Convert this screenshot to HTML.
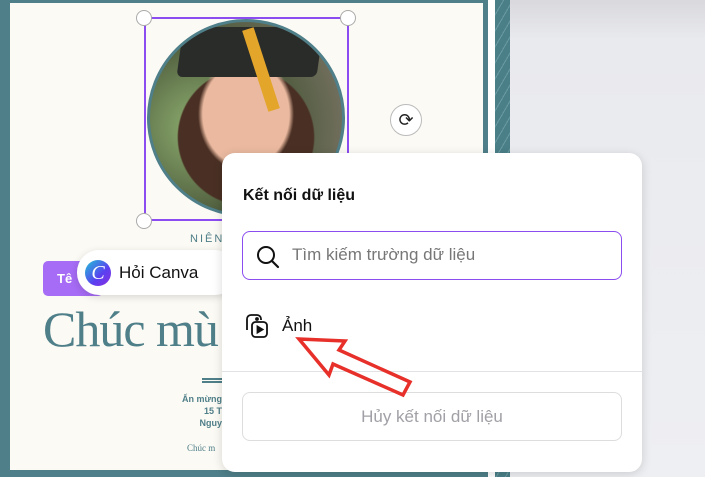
<!DOCTYPE html>
<html><head><meta charset="utf-8"><style>
*{margin:0;padding:0;box-sizing:border-box}
body{width:705px;height:477px;overflow:hidden;background:#e9eaee;font-family:"Liberation Sans","Noto Sans CJK SC",sans-serif;position:relative}
.abs{position:absolute}
</style></head><body>
<div class="abs" style="left:0;top:0;width:705px;height:477px;background:linear-gradient(#d9d9dd,#e9eaee 40px,#eeeff2)"></div>
<div class="abs" style="left:495px;top:0;width:15px;height:477px;background:repeating-linear-gradient(120deg,#4a7f88 0 7px,#6a9aa2 7px 8px)"></div>
<div class="abs" style="left:488px;top:0;width:7px;height:477px;background:#fff"></div>
<div class="abs" style="left:0;top:0;width:488px;height:477px;background:#4f7f89"></div>
<div class="abs" style="left:10px;top:3px;width:473px;height:467px;background:#fcfaf4"></div>
<!-- photo -->
<div class="abs" style="left:147px;top:19px;width:198px;height:198px;border-radius:50%;border:3px solid #4f7f89;background:radial-gradient(ellipse 25% 30% at 50% 48%,#eab99f 0 90%,transparent 100%),radial-gradient(circle at 50% 60%,#4a3024 0 45%,transparent 46%),radial-gradient(circle at 25% 55%,#8fb070,#4d5a3c 50%,#857a70);overflow:hidden">
<div class="abs" style="left:30px;top:5px;width:140px;height:50px;background:#2a2c2a;transform:skewX(-8deg);border-radius:6px"></div>
<div class="abs" style="left:105px;top:5px;width:12px;height:85px;background:#e3a52a;transform:rotate(-18deg)"></div>
</div>
<div class="abs" style="left:144px;top:17px;width:205px;height:204px;border:2px solid #8b4df0"></div>
<div class="abs" style="left:136px;top:10px;width:16px;height:16px;border-radius:50%;background:#fff;border:1px solid #aaa"></div>
<div class="abs" style="left:340px;top:10px;width:16px;height:16px;border-radius:50%;background:#fff;border:1px solid #aaa"></div>
<div class="abs" style="left:136px;top:213px;width:16px;height:16px;border-radius:50%;background:#fff;border:1px solid #aaa"></div>
<div class="abs" style="left:390px;top:104px;width:32px;height:32px;border-radius:50%;background:#fff;border:1px solid #bbb;font-size:18px;text-align:center;line-height:30px;color:#222">⟳</div>
<div class="abs" style="left:190px;top:233px;font-size:11px;letter-spacing:2px;color:#4f7f89">NIÊN</div>
<div class="abs" style="left:43px;top:261px;width:60px;height:35px;background:#a66cf5;border-radius:5px;color:#fff;font-weight:bold;font-size:13px;padding:10px 14px">Tê</div>
<div class="abs" style="left:77px;top:250px;width:160px;height:45px;background:#fff;border-radius:22px;box-shadow:0 2px 8px rgba(0,0,0,.15)"></div>
<div class="abs" style="left:85px;top:260px;width:26px;height:26px;border-radius:50%;background:linear-gradient(135deg,#22c4d6,#5a3ff0 60%,#8a2fe0);color:#fff;font-family:'Liberation Serif',serif;font-style:italic;font-size:20px;text-align:center;line-height:26px">C</div>
<div class="abs" style="left:119px;top:263px;font-size:17px;color:#111">Hỏi Canva</div>
<div class="abs" style="left:43px;top:300px;font-family:'Liberation Serif',serif;font-size:50px;color:#4f7f89;letter-spacing:-1px">Chúc mù</div>
<div class="abs" style="left:202px;top:378px;width:22px;height:5px;border-top:2px solid #4f7f89;border-bottom:2px solid #4f7f89"></div>
<div class="abs" style="left:174px;top:393px;font-size:9px;font-weight:bold;color:#4f7f89;line-height:12px;text-align:right;width:48px">Ẩn mừng<br>15 T<br>Nguy</div>
<div class="abs" style="left:187px;top:443px;font-size:9px;color:#4f7f89;font-family:'Liberation Serif',serif">Chúc m</div>
<!-- popup -->
<div class="abs" style="left:222px;top:153px;width:420px;height:319px;background:#fff;border-radius:13px;box-shadow:0 2px 10px rgba(0,0,0,.15)"></div>
<div class="abs" style="left:243px;top:187px;font-size:16px;font-weight:bold;color:#111">Kết nối dữ liệu</div>
<div class="abs" style="left:242px;top:231px;width:380px;height:49px;border:1.5px solid #8b4df0;border-radius:8px"></div>
<svg class="abs" style="left:255px;top:244px" width="26" height="26" viewBox="0 0 26 26"><circle cx="11" cy="11" r="8" fill="none" stroke="#111" stroke-width="2"/><line x1="17" y1="17" x2="23" y2="23" stroke="#111" stroke-width="2.2" stroke-linecap="round"/></svg>
<div class="abs" style="left:292px;top:245px;font-size:17px;color:#777">Tìm kiếm trường dữ liệu</div>
<svg class="abs" style="left:244px;top:313px" width="26" height="26" viewBox="0 0 26 26" fill="none" stroke="#111" stroke-width="1.8"><path d="M3 17V6a4 4 0 0 1 4-4h6a4 4 0 0 1 4 4v1"/><rect x="8" y="9" width="15" height="15" rx="3.5"/><path d="M13.5 13.5l5 3-5 3z" fill="#111"/><circle cx="13" cy="6" r="1" fill="#111"/></svg>
<div class="abs" style="left:282px;top:316px;font-size:17px;color:#111">Ảnh</div>
<div class="abs" style="left:222px;top:371px;width:420px;height:1px;background:#e2e2e6"></div>
<div class="abs" style="left:242px;top:392px;width:380px;height:49px;border:1px solid #ddd;border-radius:8px;text-align:center;font-size:17px;color:#a0a0a6;line-height:47px">Hủy kết nối dữ liệu</div>
<svg class="abs" style="left:295px;top:335px" width="120" height="65" viewBox="0 0 120 65"><path d="M4 4 L50 6 L44 15 L115 47 L108 60 L38 29 L34 40 Z" fill="none" stroke="#e8302a" stroke-width="3.5" stroke-linejoin="miter"/></svg>
</body></html>
